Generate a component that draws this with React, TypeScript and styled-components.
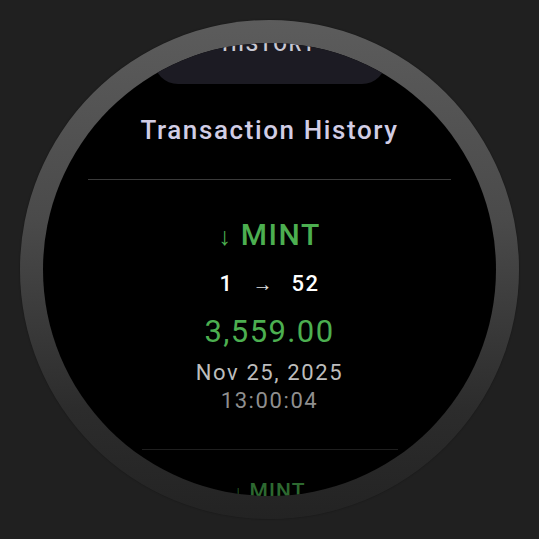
import React from "react"
import styled, { createGlobalStyle } from "styled-components"

const GlobalStyle = createGlobalStyle`
  html, body {
    margin: 0;
    padding: 0;
    background: #202020;
  }
  * {
    box-sizing: border-box;
  }
`;

// 画面全体
const Stage = styled.div`
  width: 539px;
  height: 539px;
  display: flex;
  align-items: center;
  justify-content: center;
  background: #202020;
  font-family: Roboto, "Noto Sans", sans-serif;
`;

// ベゼル
const Bezel = styled.div`
  width: 499px;
  height: 499px;
  border-radius: 50%;
  padding: 23px;
  background: linear-gradient(180deg, #5c5c5c 0%, #4a4a4a 40%, #2c2c2c 78%, #232323 100%);
  box-shadow: 0 0 2px rgba(0, 0, 0, 0.4);
`;

// 丸い画面
const Screen = styled.div`
  width: 453px;
  height: 453px;
  border-radius: 50%;
  overflow: hidden;
  background: #000;
`;

// スクロール済みのリスト
const List = styled.div`
  display: flex;
  flex-direction: column;
  align-items: center;
  margin-top: -39px;
`;

const TopChip = styled.div`
  width: 232px;
  height: 80px;
  border-radius: 24px;
  background: #1c1b23;
  color: #c9c8d2;
  display: flex;
  align-items: center;
  justify-content: center;
  font-size: 20px;
  font-weight: 500;
  letter-spacing: 1.8px;
`;

const Title = styled.div`
  margin-top: 30px;
  color: #d1cde5;
  font-size: 26px;
  font-weight: 500;
  line-height: 32px;
  letter-spacing: 1.6px;
`;

const Divider = styled.div<{ $width: number; $color: string; $top: number }>`
  width: ${(p) => p.$width}px;
  height: 1px;
  margin-top: ${(p) => p.$top}px;
  background: ${(p) => p.$color};
`;

const Item = styled.div<{ $scale?: number; $fade?: number; $top: number }>`
  display: flex;
  flex-direction: column;
  align-items: center;
  margin-top: ${(p) => p.$top}px;
  transform: scale(${(p) => p.$scale ?? 1});
  transform-origin: top center;
  opacity: ${(p) => p.$fade ?? 1};
`;

const TypeRow = styled.div`
  display: flex;
  align-items: baseline;
  gap: 10px;
  color: #4caf50;
  font-size: 30px;
  font-weight: 500;
  line-height: 36px;
  letter-spacing: 1.5px;
`;

const TypeArrow = styled.span`
  font-size: 25px;
  font-weight: 400;
  letter-spacing: 0;
`;

const TransferRow = styled.div`
  display: flex;
  align-items: baseline;
  gap: 19px;
  margin-top: 15px;
  color: #ffffff;
  font-size: 22px;
  font-weight: 500;
  line-height: 28px;
  letter-spacing: 1.5px;
`;

const SmallArrow = styled.span`
  font-size: 20px;
  font-weight: 400;
  color: #e0e0e0;
  letter-spacing: 0;
`;

const Amount = styled.div`
  margin-top: 16px;
  color: #4caf50;
  font-size: 31px;
  font-weight: 400;
  line-height: 36px;
  letter-spacing: 1.4px;
`;

const DateText = styled.div<{ $color: string; $top: number }>`
  margin-top: ${(p) => p.$top}px;
  color: ${(p) => p.$color};
  font-size: 22px;
  font-weight: 400;
  line-height: 27px;
  letter-spacing: 1.6px;
`;

type Tx = {
  kind: string
  from: string
  to: string
  amount: string
  date: string
  time: string
}

const txs: Tx[] = [
  { kind: "MINT", from: "1", to: "52", amount: "3,559.00", date: "Nov 25, 2025", time: "13:00:04" },
  { kind: "MINT", from: "1", to: "52", amount: "3,559.00", date: "Nov 25, 2025", time: "12:58:41" },
];

const TxItem = ({ tx, scale, fade, top }: { tx: Tx; scale?: number; fade?: number; top: number }) => (
  <Item $scale={scale} $fade={fade} $top={top}>
    <TypeRow>
      <TypeArrow>↓</TypeArrow>
      <span>{tx.kind}</span>
    </TypeRow>
    <TransferRow>
      <span>{tx.from}</span>
      <SmallArrow>→</SmallArrow>
      <span>{tx.to}</span>
    </TransferRow>
    <Amount>{tx.amount}</Amount>
    <DateText $color="#bdbdbd" $top={9}>{tx.date}</DateText>
    <DateText $color="#8f8f8f" $top={1}>{tx.time}</DateText>
  </Item>
);

const App = () => (
  <>
    <GlobalStyle />
    <Stage>
      <Bezel>
        <Screen>
          <List>
            <TopChip>HISTORY</TopChip>
            <Title>Transaction History</Title>
            <Divider $width={363} $color="#3a3a3a" $top={33} />
            <TxItem tx={txs[0]} top={37} />
            <Divider $width={256} $color="#1f1f1f" $top={35} />
            <TxItem tx={txs[1]} top={28} scale={0.7} fade={0.6} />
          </List>
        </Screen>
      </Bezel>
    </Stage>
  </>
);

export default App;
